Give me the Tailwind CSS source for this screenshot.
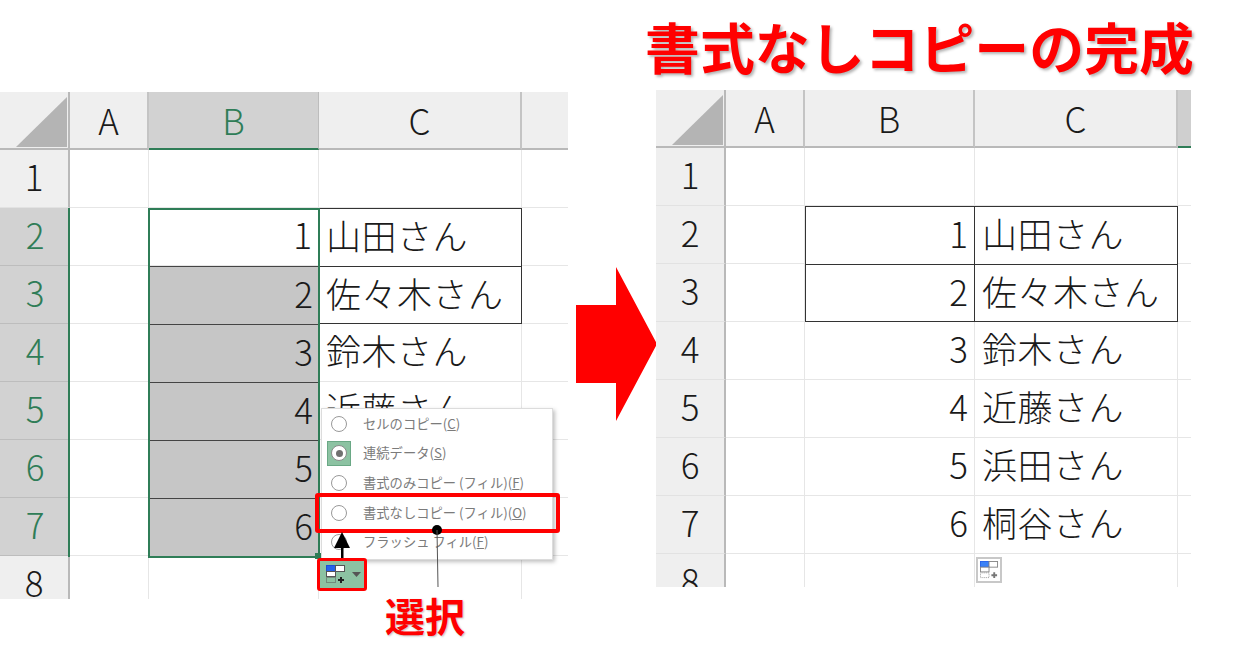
<!DOCTYPE html>
<html lang="ja">
<head>
    <meta charset="UTF-8">
    <title>書式なしコピーの完成</title>
    <script src="https://cdn.jsdelivr.net/npm/@tailwindcss/browser@4"></script>
</head>
<body class="bg-white">
    <div class="flex w-[1240px] h-[671px] overflow-hidden font-['Noto_Sans_CJK_JP','Noto_Sans',sans-serif]">

        <!-- left sheet: fill options open -->
        <div class="w-[568px] pt-[92px] shrink-0">
            <div class="relative">
                <div id="sheet-left" class="grid grid-cols-[70px_79px_170px_203px_46px] auto-rows-[58px] h-[507px] overflow-hidden"></div>

                <!-- selection outline -->
                <div class="absolute left-[148px] top-[116px] w-[172px] h-[350px] border-2 border-[#2f7d57]"></div>
                <div class="absolute left-[68px] top-[116px] h-[349px] w-[2px] bg-[#2f7d57]"></div>
                <div class="absolute left-[315px] top-[461px] w-[6px] h-[6px] bg-[#2f7d57]"></div>

                <!-- auto fill menu -->
                <div class="absolute left-[321px] top-[316px] w-[232px] h-[152px] bg-white border border-[#dcdcdc] shadow-[2px_2px_4px_rgba(0,0,0,0.25)] flex flex-col text-[13.3px] leading-[20px] text-[#7b7b7b]">
                    <div class="h-[29.6px] flex items-center"><span class="w-[16px] h-[16px] rounded-full border-[1.5px] border-[#999999] bg-white ml-[9px] mr-[16px]"></span><span>セルのコピー(<u>C</u>)</span></div>
                    <div class="h-[29.6px] flex items-center relative">
                        <span class="absolute left-[5px] top-[2px] w-[24px] h-[25px] bg-[#8cc2a2] border border-[#6aa885]"></span>
                        <span class="relative w-[16px] h-[16px] rounded-full border-[1.5px] border-[#8a8a8a] bg-white ml-[9px] mr-[16px] flex items-center justify-center"><span class="w-[7px] h-[7px] rounded-full bg-[#707070]"></span></span>
                        <span>連続データ(<u>S</u>)</span>
                    </div>
                    <div class="h-[29.6px] flex items-center"><span class="w-[16px] h-[16px] rounded-full border-[1.5px] border-[#999999] bg-white ml-[9px] mr-[16px]"></span><span>書式のみコピー (フィル)(<u>F</u>)</span></div>
                    <div class="h-[29.6px] flex items-center"><span class="w-[16px] h-[16px] rounded-full border-[1.5px] border-[#999999] bg-white ml-[9px] mr-[16px]"></span><span>書式なしコピー (フィル)(<u>O</u>)</span></div>
                    <div class="h-[29.6px] flex items-center"><span class="w-[16px] h-[16px] rounded-full border-[1.5px] border-[#999999] bg-white ml-[9px] mr-[16px]"></span><span>フラッシュ フィル(<u>F</u>)</span></div>
                </div>

                <!-- red highlight on the menu item -->
                <div class="absolute left-[315px] top-[401px] w-[245px] h-[40px] border-[4px] border-[#ff0000] rounded-[3px]"></div>

                <!-- fill options button -->
                <div class="absolute left-[317px] top-[466px] w-[50px] h-[33px] border-[3px] border-[#ff0000] rounded-[3px] bg-[#8cc2a2] flex items-center pl-[6px]">
                    <svg width="20" height="19" viewBox="0 0 20 19">
                        <rect x="0.5" y="0.5" width="9" height="6" fill="#2563eb" stroke="#1d4ed8"/>
                        <rect x="9.5" y="0.5" width="9" height="6" fill="#ffffff" stroke="#555555"/>
                        <rect x="0.5" y="6.5" width="9" height="5" fill="#ffffff" stroke="#555555"/>
                        <rect x="0.5" y="12.5" width="9" height="5" fill="none" stroke="#555555" stroke-dasharray="1 1"/>
                        <path d="M15 12v6M12 15h6" stroke="#222222" stroke-width="2"/>
                    </svg>
                    <svg class="ml-[6px]" width="9" height="5" viewBox="0 0 9 5"><path d="M0 0h9L4.5 5z" fill="#555555"/></svg>
                </div>

                <!-- black pointers -->
                <svg class="absolute left-[330px] top-[438px]" width="24" height="30" viewBox="0 0 24 30">
                    <path d="M12 2L20 18H4z" fill="#000000"/>
                    <rect x="11" y="18" width="2.5" height="10" fill="#000000"/>
                </svg>
                <svg class="absolute left-[430px] top-[431px]" width="16" height="66" viewBox="0 0 16 66">
                    <circle cx="7" cy="7" r="5" fill="#000000"/>
                    <path d="M7 7L8 64" stroke="#555555" stroke-width="1"/>
                </svg>

                <div class="absolute left-[385px] top-[497px] text-[40px] leading-[52px] font-bold text-[#ff0000] [text-shadow:1px_1px_2px_rgba(0,0,0,0.25)]">選択</div>
            </div>
        </div>

        <!-- big arrow -->
        <div class="w-[80px] shrink-0 pt-[267px]">
            <svg class="ml-[8px] overflow-visible" width="81" height="154" viewBox="0 0 81 154">
                <path d="M0 38H40V0L81 77L40 154V116H0z" fill="#ff0000"/>
            </svg>
        </div>

        <!-- right sheet: result -->
        <div class="w-[544px] shrink-0">
            <div class="h-[90px] pt-[12px] -ml-[3px] text-[54.9px] leading-[66px] font-bold text-[#ff0000] whitespace-nowrap [text-shadow:2px_2px_3px_rgba(0,0,0,0.3)]">書式なしコピーの完成</div>
            <div class="relative ml-[8px]">
                <div id="sheet-right" class="grid grid-cols-[70px_79px_170px_203px_13px] auto-rows-[58px] w-[535px] h-[497px] overflow-hidden"></div>
                <div class="absolute left-[320px] top-[467px] w-[26px] h-[26px] bg-white border-2 border-[#c8c8c8] flex items-center justify-center">
                    <svg width="19" height="18" viewBox="0 0 20 19">
                        <rect x="0.5" y="0.5" width="9" height="6" fill="#3b82f6" stroke="#2563eb"/>
                        <rect x="9.5" y="0.5" width="9" height="6" fill="#ffffff" stroke="#888888"/>
                        <rect x="0.5" y="6.5" width="9" height="5" fill="#ffffff" stroke="#888888"/>
                        <rect x="0.5" y="12.5" width="9" height="5" fill="none" stroke="#999999" stroke-dasharray="1 1"/>
                        <path d="M15 12v6M12 15h6" stroke="#777777" stroke-width="2"/>
                    </svg>
                </div>
            </div>
        </div>
    </div>

    <script>
        const names = ['山田さん', '佐々木さん', '鈴木さん', '近藤さん', '浜田さん', '桐谷さん'];
        const colLabels = ['A', 'B', 'C', ''];

        const textBase = 'flex items-center pb-[4px] text-[35px] font-light ';
        const colHead = 'flex items-center justify-center text-[35px] font-light bg-[#efefef] text-[#1a1a1a] border-r-2 border-b-2 border-r-[#c4c4c4] border-b-[#b9b9b9]';
        const colHeadActive = 'flex items-center justify-center text-[35px] font-light border-r border-b-2 border-b-[#2f7d57] border-r-[#bdbdbd] bg-[#d2d2d2] text-[#2f7d57]';
        const rowHead = textBase + 'justify-center bg-[#efefef] text-[#1a1a1a] border-r-2 border-b border-r-[#b9b9b9] border-b-[#e2e2e2]';
        const cellBase = textBase + 'text-[#1a1a1a] border-r border-b border-[#e6e6e6] ';

        function buildSheet(el, isLeft) {
            let html = '<div class="bg-[#efefef] border-r-2 border-b-2 border-[#b9b9b9]"><svg width="68" height="56" viewBox="0 0 68 56"><path d="M16 55L67 5V55z" fill="#b4b4b4"/></svg></div>';
            colLabels.forEach((label, i) => {
                let cls = colHead;
                if (isLeft && i === 1) cls = colHeadActive;
                if (i === 3) cls = isLeft ? 'bg-[#efefef] border-b-2 border-[#b9b9b9]' : 'bg-[#cfcfcf] border-b-2 border-[#2f7d57]';
                html += '<div class="' + cls + '">' + label + '</div>';
            });
            for (let r = 1; r <= 8; r++) {
                const selected = isLeft && r >= 2 && r <= 7;
                const headCls = selected
                    ? textBase + 'justify-center border-b border-[#bdbdbd] bg-[#d2d2d2] text-[#2f7d57]'
                    : rowHead;
                html += '<div class="' + headCls + '">' + r + '</div>';
                html += '<div class="' + cellBase + '"></div>';

                const hasData = r >= 2 && r <= 7;
                const boxed = r === 2 || r === 3;
                let bCls = cellBase + 'justify-end pr-[6px]';
                if (isLeft && r >= 3 && r <= 7) bCls = textBase + 'justify-end pr-[6px] text-[#1a1a1a] bg-[#c6c6c6] border-t border-[#444444]';
                if (!isLeft && boxed) bCls = textBase + 'justify-end pr-[6px] text-[#1a1a1a] border-l border-t border-r border-[#333333]' + (r === 3 ? ' border-b' : '');
                html += '<div class="' + bCls + '">' + (hasData ? r - 1 : '') + '</div>';

                // rows 6 and 7 of the left sheet sit fully behind the fill menu
                const hidden = isLeft && r >= 6;
                let cCls = cellBase + 'pl-[7px] tracking-[0.5px] whitespace-nowrap';
                if (boxed) cCls = textBase + 'pl-[7px] tracking-[0.5px] whitespace-nowrap text-[#1a1a1a] border-t border-r border-[#333333]' + (r === 3 ? ' border-b' : '');
                html += '<div class="' + cCls + '">' + (hasData && !hidden ? names[r - 2] : '') + '</div>';
                html += '<div class="border-b border-[#e6e6e6]"></div>';
            }
            el.innerHTML = html;
        }

        buildSheet(document.getElementById('sheet-left'), true);
        buildSheet(document.getElementById('sheet-right'), false);
    </script>
</body>
</html>
